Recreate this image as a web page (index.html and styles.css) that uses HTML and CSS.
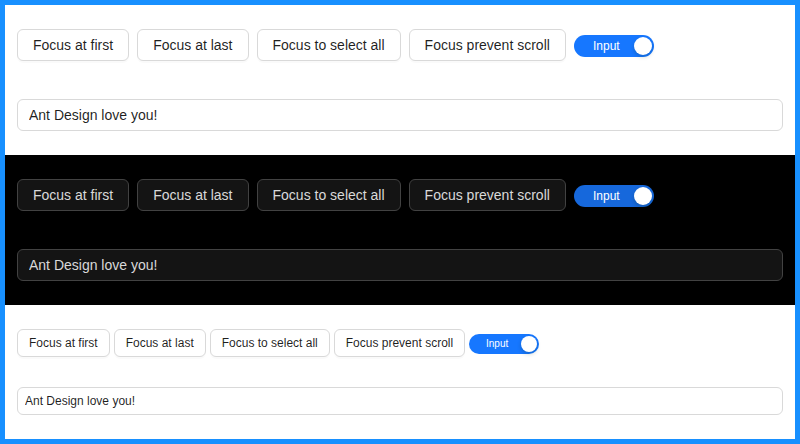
FILE: index.html
```html
<!DOCTYPE html>
<html>
<head>
<meta charset="utf-8">
<link rel="stylesheet" href="styles.css">
</head>
<body>
<div class="frame">
  <section class="demo light">
    <div class="row">
      <button class="btn">Focus at first</button>
      <button class="btn">Focus at last</button>
      <button class="btn">Focus to select all</button>
      <button class="btn">Focus prevent scroll</button>
      <span class="switch"><span class="switch-text">Input</span><span class="knob"></span></span>
    </div>
    <input class="field" value="Ant Design love you!">
  </section>
  <section class="demo dark">
    <div class="row">
      <button class="btn">Focus at first</button>
      <button class="btn">Focus at last</button>
      <button class="btn">Focus to select all</button>
      <button class="btn">Focus prevent scroll</button>
      <span class="switch"><span class="switch-text">Input</span><span class="knob"></span></span>
    </div>
    <input class="field" value="Ant Design love you!">
  </section>
  <section class="demo light small">
    <div class="row">
      <button class="btn">Focus at first</button>
      <button class="btn">Focus at last</button>
      <button class="btn">Focus to select all</button>
      <button class="btn">Focus prevent scroll</button>
      <span class="switch"><span class="switch-text">Input</span><span class="knob"></span></span>
    </div>
    <input class="field" value="Ant Design love you!">
  </section>
</div>
</body>
</html>
```
FILE: styles.css
```css
* { box-sizing: border-box; }
html, body { margin: 0; padding: 0; }
body {
  font-family: "Liberation Sans", Arial, sans-serif;
  background: #fff;
}
.frame {
  width: 800px;
  height: 444px;
  border: 5px solid #1890ff;
  display: flex;
  flex-direction: column;
}
.demo {
  padding: 24px 12px;
  display: flex;
  flex-direction: column;
  gap: 38px;
}
.row {
  display: flex;
  align-items: center;
  gap: 8px;
}
.btn {
  font-family: inherit;
  font-size: 14px;
  height: 32px;
  padding: 0 15px;
  border-radius: 6px;
  border: 1px solid #d9d9d9;
  background: #fff;
  color: rgba(0,0,0,0.88);
  box-shadow: 0 2px 0 rgba(0,0,0,0.02);
  line-height: 30px;
  cursor: pointer;
  white-space: nowrap;
}
.switch {
  position: relative;
  display: inline-flex;
  align-items: center;
  width: 80px;
  height: 22px;
  margin-top: 2px;
  border-radius: 11px;
  background: #1677ff;
  padding: 0 24px 0 9px;
}
.switch-text {
  flex: 1;
  text-align: center;
  color: #fff;
  font-size: 12px;
  line-height: 22px;
}
.knob {
  position: absolute;
  right: 2px;
  top: 2px;
  width: 18px;
  height: 18px;
  border-radius: 50%;
  background: #fff;
  box-shadow: 0 2px 4px rgba(0,35,11,0.2);
}
.field {
  display: block;
  width: 100%;
  height: 32px;
  font-family: inherit;
  font-size: 14px;
  padding: 0 11px;
  border: 1px solid #d9d9d9;
  border-radius: 6px;
  background: #fff;
  color: rgba(0,0,0,0.88);
  outline: none;
}
.dark { background: #000; }
.dark .btn {
  background: #141414;
  border-color: #424242;
  color: rgba(255,255,255,0.85);
}
.dark .switch { background: #1668dc; }
.dark .field {
  background: #141414;
  border-color: #424242;
  color: rgba(255,255,255,0.85);
}
.small { gap: 30px; flex: 1; }
.small .row { gap: 4px; }
.small .btn {
  font-size: 12px;
  height: 28px;
  line-height: 26px;
  padding: 0 11px;
}
.small .switch {
  width: 70px;
  height: 20px;
  border-radius: 10px;
  padding: 0 20px 0 6px;
}
.small .switch-text { font-size: 10px; line-height: 20px; }
.small .knob { width: 16px; height: 16px; }
.small .field {
  height: 28px;
  font-size: 12px;
  padding: 0 7px;
}
```
